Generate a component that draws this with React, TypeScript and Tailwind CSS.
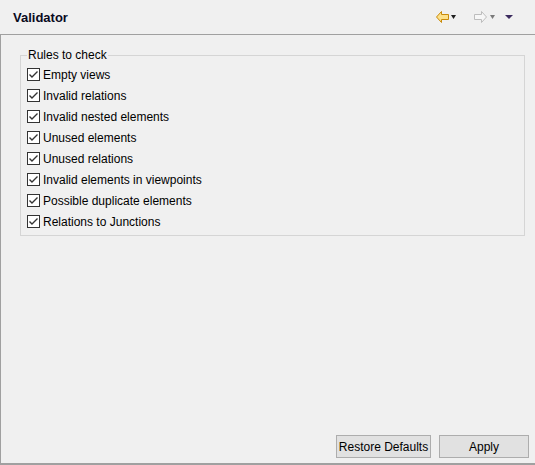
import React from 'react';

const rules = [
  'Empty views',
  'Invalid relations',
  'Invalid nested elements',
  'Unused elements',
  'Unused relations',
  'Invalid elements in viewpoints',
  'Possible duplicate elements',
  'Relations to Junctions',
];

function ArrowLeft() {
  return (
    <svg width="13" height="12" viewBox="0 0 13 12">
      <path
        d="M0.5 6 L5.5 0.5 L5.5 3.5 L12.5 3.5 L12.5 8.5 L5.5 8.5 L5.5 11.5 Z"
        fill="#fde18a"
        stroke="#c98a0a"
        strokeLinejoin="round"
      />
    </svg>
  );
}

function ArrowRight() {
  return (
    <svg width="13" height="12" viewBox="0 0 13 12">
      <path
        d="M12.5 6 L7.5 0.5 L7.5 3.5 L0.5 3.5 L0.5 8.5 L7.5 8.5 L7.5 11.5 Z"
        fill="#f7f7f7"
        stroke="#bdbdbd"
        strokeLinejoin="round"
      />
    </svg>
  );
}

function Caret({ color, w = 7 }: { color: string; w?: number }) {
  return (
    <svg width={w} height="4" viewBox={`0 0 ${w} 4`}>
      <path d={`M0 0 L${w} 0 L${w / 2} 4 Z`} fill={color} />
    </svg>
  );
}

function Check() {
  return (
    <span className="flex h-[13px] w-[13px] shrink-0 items-center justify-center border border-[#333333] bg-white">
      <svg width="11" height="11" viewBox="0 0 11 11">
        <path d="M1.5 5.5 L4 8 L9.5 2.5" fill="none" stroke="#333333" strokeWidth="1.4" />
      </svg>
    </span>
  );
}

export default function App() {
  return (
    <div
      className="flex h-[465px] w-[535px] flex-col bg-[#f0f0f0] text-[12px] text-black"
      style={{ fontFamily: '"Liberation Sans", Arial, sans-serif' }}
    >
      <div className="flex h-[35px] shrink-0 items-center justify-between border-b border-[#a0a0a0] pl-[13px] pr-[22px]">
        <span className="pt-[2px] text-[13px] font-bold text-[#0a0a1e]">Validator</span>
        <div className="flex items-center">
          <ArrowLeft />
          <span className="ml-[2px] mr-[18px] flex"><Caret color="#1e1e1e" w={5} /></span>
          <ArrowRight />
          <span className="ml-[3px] mr-[10px] flex"><Caret color="#7a7a7a" w={5} /></span>
          <Caret color="#3b2a5e" w={8} />
        </div>
      </div>
      <div className="flex flex-1 flex-col border-b-2 border-l border-[#a0a0a0]">
        <fieldset className="ml-[19px] mr-[10px] mt-[12px] border border-[#d5d5d5] px-[6px] pb-[3px]">
          <legend className="px-[1px] leading-[16px]">Rules to check</legend>
          <div className="mt-[1px] flex flex-col">
            {rules.map((r) => (
              <label key={r} className="flex h-[21px] items-center gap-[3px]">
                <Check />
                <span className="leading-[16px]">{r}</span>
              </label>
            ))}
          </div>
        </fieldset>
        <div className="flex-1" />
        <div className="mb-[5px] flex justify-end gap-[8px] pr-[6px]">
          <button className="h-[23px] w-[95px] whitespace-nowrap border border-[#adadad] bg-[#e1e1e1] px-0">Restore Defaults</button>
          <button className="h-[23px] w-[90px] whitespace-nowrap border border-[#adadad] bg-[#e1e1e1] px-0">Apply</button>
        </div>
      </div>
    </div>
  );
}
